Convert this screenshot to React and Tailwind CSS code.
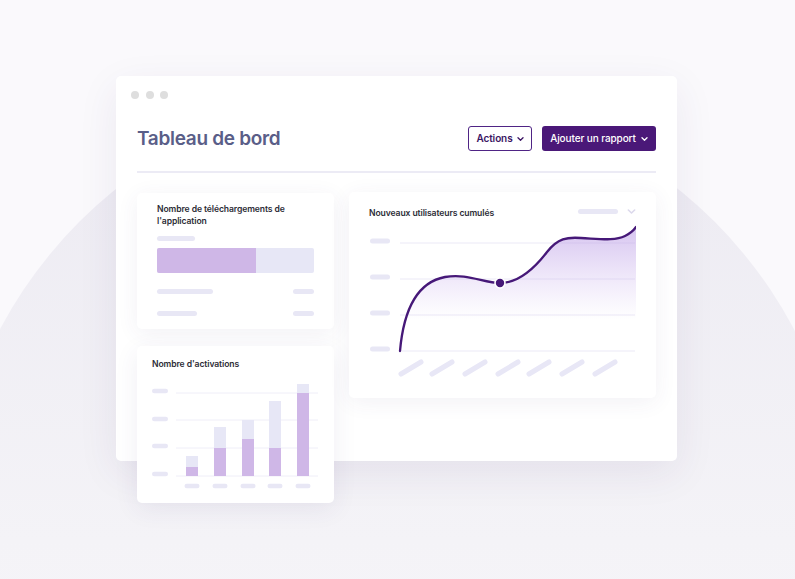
import React from "react";

const pill = "bg-[#e8e7f5] rounded-full";

function Chevron({ className = "", color = "currentColor", w = 7, h = 4 }) {
  return (
    <svg width={w} height={h} viewBox="0 0 7 4" fill="none" className={className}>
      <path d="M1 0.8l2.5 2.4L6 0.8" stroke={color} strokeWidth="1.3" strokeLinecap="round" strokeLinejoin="round" />
    </svg>
  );
}

function DownloadsCard() {
  return (
    <div className="h-[136px] bg-white rounded-[5px] shadow-[0_4px_22px_rgba(70,50,120,0.07)] pl-[20px] pt-[10px]">
      <p className="text-[8.6px] leading-[12px] font-semibold tracking-[-0.1px] text-[#2c2c36] w-[150px]">
        Nombre de téléchargements de l'application
      </p>
      <div className={`${pill} mt-[9px] w-[38px] h-[5px]`} />
      <div className="mt-[7px] w-[157px] h-[25px] flex rounded-[2px] overflow-hidden bg-[#e7e7f6]">
        <div className="w-[99px] h-full bg-[#cfb7e7]" />
      </div>
      <div className="mt-[16px] w-[157px] flex justify-between">
        <div className={`${pill} w-[56px] h-[5px]`} />
        <div className={`${pill} w-[21px] h-[5px]`} />
      </div>
      <div className="mt-[17px] w-[157px] flex justify-between">
        <div className={`${pill} w-[40px] h-[5px]`} />
        <div className={`${pill} w-[21px] h-[5px]`} />
      </div>
    </div>
  );
}

const bars = [
  { x: 34, light: 76, purple: 87 },
  { x: 62, light: 47, purple: 68 },
  { x: 90, light: 40, purple: 59 },
  { x: 117, light: 21, purple: 68 },
  { x: 145, light: 4, purple: 13 },
];

function ActivationsCard() {
  return (
    <div className="h-[157px] bg-white rounded-[5px] shadow-[0_6px_24px_rgba(70,50,120,0.08)] px-[15px] pt-[12px]">
      <p className="text-[8.6px] leading-[12px] font-semibold tracking-[-0.1px] text-[#2c2c36]">Nombre d'activations</p>
      <svg width="166" height="112" viewBox="0 0 166 112" className="mt-[10px] block">
        {[11, 39, 66, 94].map((y) => (
          <rect key={y} x="0" y={y - 2.25} width="16" height="4.5" rx="2.25" fill="#e8e7f5" />
        ))}
        {[13, 40, 68, 96].map((y) => (
          <line key={y} x1="24" x2="166" y1={y} y2={y} stroke="#efeef8" strokeWidth="1" />
        ))}
        {bars.map((b) => (
          <g key={b.x}>
            <rect x={b.x} y={b.light} width="12" height={96 - b.light} fill="#e7e7f6" />
            <rect x={b.x} y={b.purple} width="12" height={96 - b.purple} fill="#cfb7e7" />
            <rect x={b.x - 1.5} y="103.75" width="15" height="4.5" rx="2.25" fill="#e8e7f5" />
          </g>
        ))}
      </svg>
    </div>
  );
}

const curve =
  "M31 126 C 34 92 44 58 76 52 C 98 48 115 58 131 58 C 150 58 165 44 178 27 C 189 13 198 12 212 13 C 232 14 246 16 256 11 C 262 8 265 5 267 2";

function UsersCard() {
  return (
    <div className="w-[307px] h-[206px] -mt-[1px] bg-white rounded-[5px] shadow-[0_4px_22px_rgba(70,50,120,0.07)] px-[20px] pt-[15px]">
      <div className="flex items-center justify-between h-[12px]">
        <p className="text-[8.6px] leading-[12px] font-semibold tracking-[-0.1px] text-[#2c2c36]">Nouveaux utilisateurs cumulés</p>
        <div className="flex items-center gap-[9px] -mt-[4px]">
          <div className={`${pill} w-[40px] h-[5px]`} />
          <Chevron color="#dcd9ec" w={9} h={5} />
        </div>
      </div>
      <svg width="267" height="160" viewBox="0 0 267 160" className="mt-[6px] block">
        <defs>
          <linearGradient id="fill" x1="0" y1="0" x2="0" y2="1">
            <stop offset="0" stopColor="#b594e3" stopOpacity="0.55" />
            <stop offset="0.75" stopColor="#c9b0ee" stopOpacity="0" />
          </linearGradient>
        </defs>
        {[16, 52, 88, 124].map((y) => (
          <rect key={y} x="1" y={y - 2.5} width="20" height="5" rx="2.5" fill="#e8e7f5" />
        ))}
        {[18, 54, 90, 126].map((y) => (
          <line key={y} x1="31" x2="266" y1={y} y2={y} stroke="#ebe9f6" strokeWidth="1" />
        ))}
        <path d={`${curve} L267 126 L31 126 Z`} fill="url(#fill)" />
        <path d={curve} fill="none" stroke="#461878" strokeWidth="2.3" strokeLinecap="round" />
        <circle cx="131" cy="58" r="5" fill="#461878" stroke="#fff" strokeWidth="1.6" />
        {[42, 73, 106, 139, 170, 203, 236].map((cx) => (
          <line key={cx} x1={cx - 10} y1="149" x2={cx + 10} y2="137" stroke="#e8e7f6" strokeWidth="5" strokeLinecap="round" />
        ))}
      </svg>
    </div>
  );
}

export default function App() {
  return (
    <div
      className="relative w-[795px] h-[579px] overflow-hidden bg-[#faf9fc] pt-[76px] pl-[116px]"
      style={{ fontFamily: "Inter, 'Noto Sans', sans-serif" }}
    >
      <div className="absolute left-[-52px] top-[90px] w-[898px] h-[898px] rounded-full bg-gradient-to-b from-[#eceaf2] via-[#f4f3f7] to-[#faf9fc]" />
      <div className="relative w-[561px] h-[385px] bg-white rounded-[5px] shadow-[0_12px_40px_rgba(60,40,100,0.08)] px-[21px] pt-[15px]">
        <div className="flex gap-[6.5px] -ml-[6px]">
          <div className="w-2 h-2 rounded-full bg-[#dedede]" />
          <div className="w-2 h-2 rounded-full bg-[#dedede]" />
          <div className="w-2 h-2 rounded-full bg-[#dedede]" />
        </div>
        <div className="mt-[27px] h-[25px] flex items-center justify-between">
          <h1 className="text-[19px] leading-[24px] font-semibold text-[#5a5e88] tracking-[-0.3px]">Tableau de bord</h1>
          <div className="flex gap-[10px]">
            <button className="w-[64px] h-[25px] flex items-center justify-center gap-[4px] border-[1.5px] border-[#4f2485] rounded-[3px] text-[10px] font-semibold tracking-[-0.1px] text-[#3b1463]">
              Actions
              <Chevron />
            </button>
            <button className="w-[114px] h-[25px] flex items-center justify-center gap-[5px] bg-[#4a1878] rounded-[3px] text-[10px] font-medium tracking-[-0.1px] text-white">
              Ajouter un rapport
              <Chevron />
            </button>
          </div>
        </div>
        <div className="mt-[20px] h-[2px] bg-[#ecebf5]" />
        <div className="mt-[20px] flex gap-[15px] items-start">
          <div className="w-[197px] flex flex-col gap-[17px]">
            <DownloadsCard />
            <ActivationsCard />
          </div>
          <UsersCard />
        </div>
      </div>
    </div>
  );
}
